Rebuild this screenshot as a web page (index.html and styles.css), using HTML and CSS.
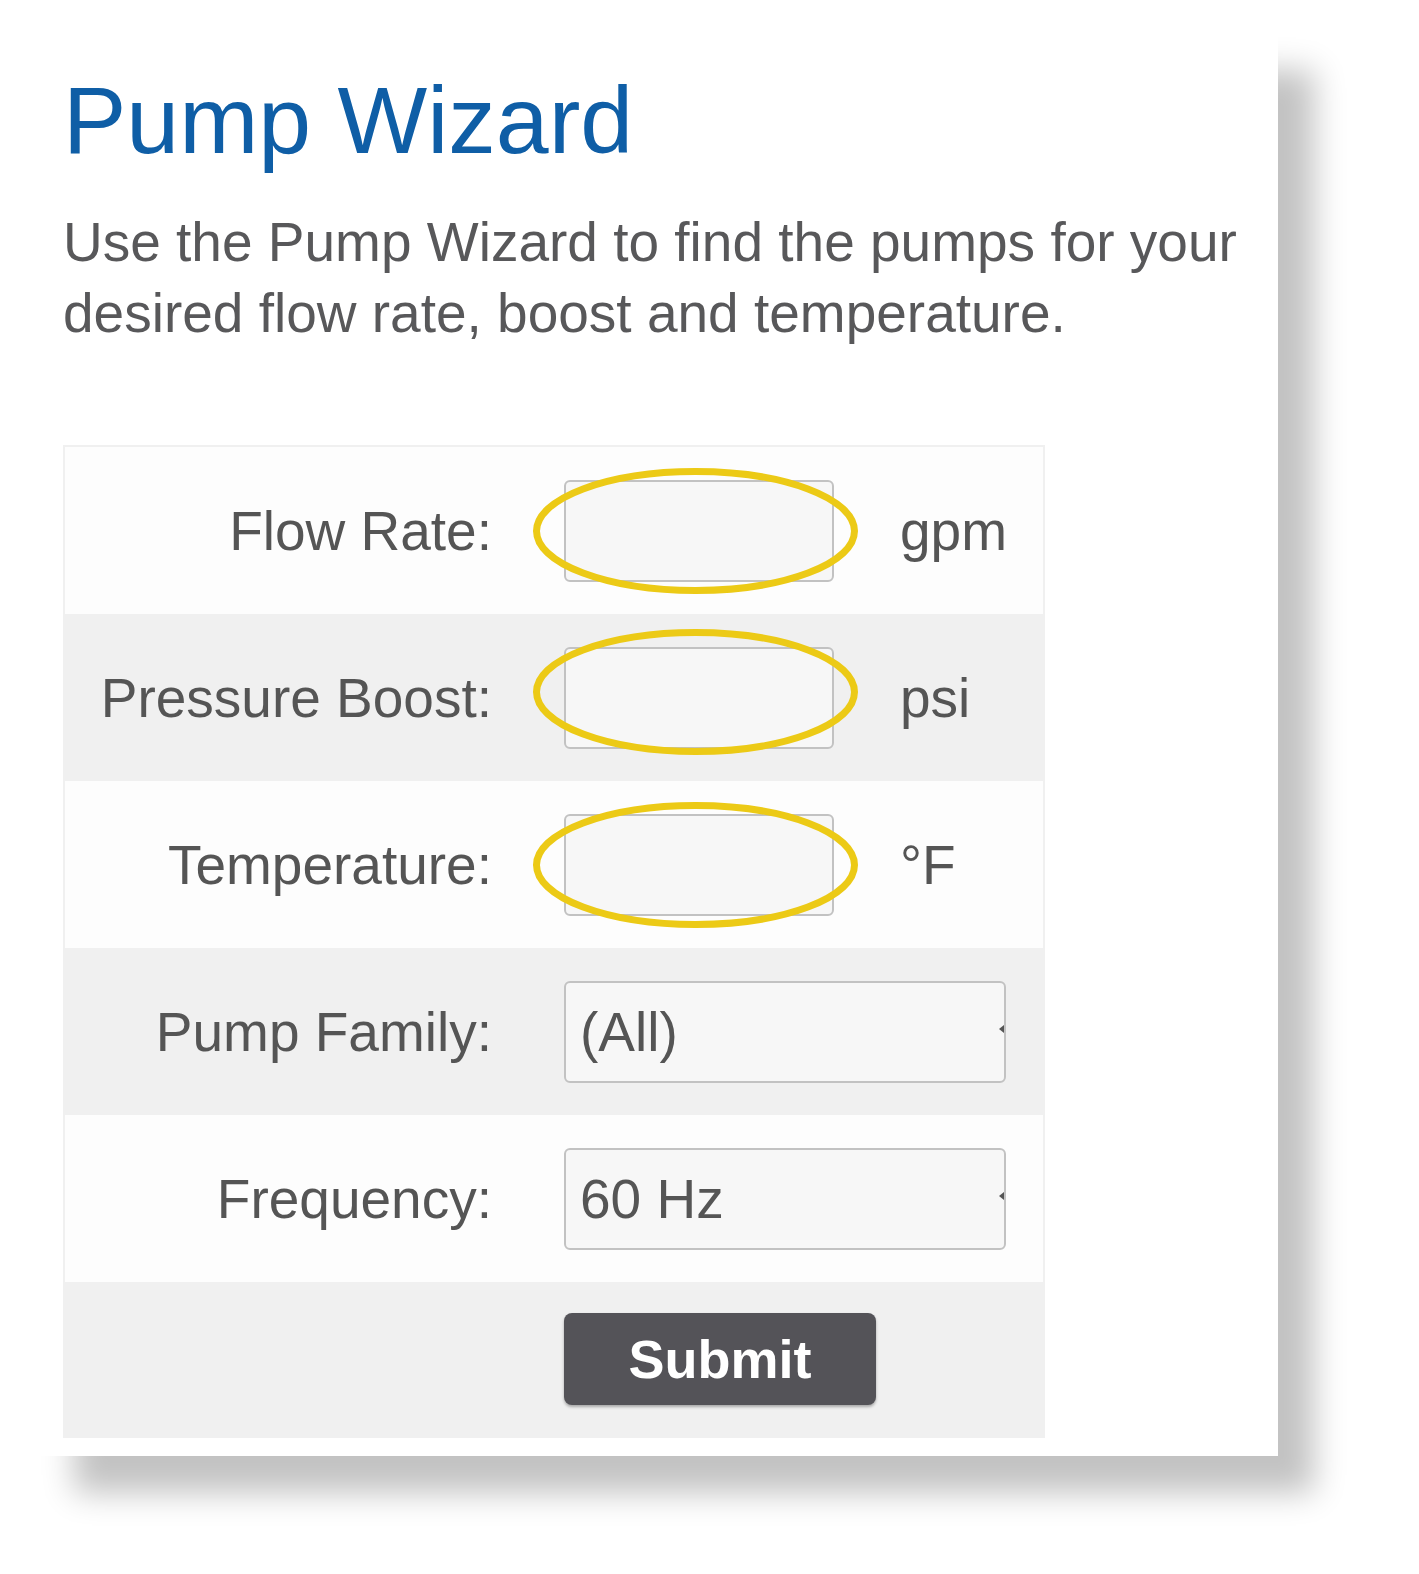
FILE: index.html
```html
<!DOCTYPE html>
<html lang="en">
<head>
    <meta charset="UTF-8">
    <meta name="viewport" content="width=device-width, initial-scale=1.0">
    <title>Pump Wizard</title>
    <link rel="stylesheet" href="styles.css">
</head>
<body>
    <div class="card">
        <h1>Pump Wizard</h1>
        <p class="intro">Use the Pump Wizard to find the pumps for your desired flow rate, boost and temperature.</p>

        <form class="wizard" onsubmit="return false;">
            <div class="row">
                <label for="flow">Flow Rate:</label>
                <div class="field">
                    <input type="text" id="flow">
                    <svg class="ring" viewBox="0 0 325 126"><ellipse cx="162.5" cy="63" rx="159" ry="59.5"/></svg>
                </div>
                <span class="unit">gpm</span>
            </div>
            <div class="row alt">
                <label for="boost">Pressure Boost:</label>
                <div class="field">
                    <input type="text" id="boost">
                    <svg class="ring up" viewBox="0 0 325 126"><ellipse cx="162.5" cy="63" rx="159" ry="59.5"/></svg>
                </div>
                <span class="unit">psi</span>
            </div>
            <div class="row">
                <label for="temp">Temperature:</label>
                <div class="field">
                    <input type="text" id="temp">
                    <svg class="ring" viewBox="0 0 325 126"><ellipse cx="162.5" cy="63" rx="159" ry="59.5"/></svg>
                </div>
                <span class="unit">&deg;F</span>
            </div>
            <div class="row alt">
                <label for="family">Pump Family:</label>
                <div class="select-wrap">
                    <select id="family">
                        <option>(All)</option>
                    </select>
                </div>
            </div>
            <div class="row">
                <label for="freq">Frequency:</label>
                <div class="select-wrap">
                    <select id="freq">
                        <option>60 Hz</option>
                        <option>50 Hz</option>
                    </select>
                </div>
            </div>
            <div class="row alt last">
                <span></span>
                <button type="submit">Submit</button>
            </div>
        </form>
    </div>
</body>
</html>
```

FILE: styles.css
```css
body {
    font-family: "Liberation Sans", Arial, sans-serif;
    background-color: #fff;
    color: #555;
    margin: 0;
    padding: 0 0 118px 0;
}
.card {
    background-color: #fff;
    margin: 33px 0 0 38px;
    width: 1240px;
    padding: 40px 20px 18px 25px;
    box-sizing: border-box;
    box-shadow: 36px 37px 30px rgba(0, 0, 0, 0.24);
}
h1 {
    color: #0f5ea6;
    font-size: 95px;
    font-weight: normal;
    line-height: 1;
    margin: 0;
}
.intro {
    font-size: 55px;
    line-height: 71px;
    margin: 39px 0 96px 0;
    color: #58585a;
}
.wizard {
    width: 982px;
    border: 2px solid #f0f0f0;
    box-sizing: border-box;
}
.row {
    display: grid;
    grid-template-columns: 499px 270px 1fr;
    align-items: center;
    height: 167px;
    background-color: #fdfdfd;
    font-size: 55px;
}
.row.alt {
    background-color: #f0f0f0;
}
.row.last {
    height: 154px;
}
.row label {
    text-align: right;
    padding-right: 72px;
    color: #555;
}
.field {
    position: relative;
    height: 102px;
}
.field input {
    width: 100%;
    height: 102px;
    box-sizing: border-box;
    border: 2px solid #c2c2c2;
    border-radius: 6px;
    background-color: #f7f7f7;
    font: inherit;
    margin: 0;
}
.ring {
    position: absolute;
    left: -31px;
    top: -12px;
    width: 325px;
    height: 126px;
    overflow: visible;
}
.ring.up {
    top: -18px;
}
.ring ellipse {
    fill: none;
    stroke: #ecca16;
    stroke-width: 7;
}
.unit {
    padding-left: 66px;
    color: #555;
}
.select-wrap {
    grid-column: 2 / 4;
    position: relative;
    width: 442px;
    height: 102px;
}
.select-wrap::after {
    content: "";
    position: absolute;
    right: 2px;
    top: 44px;
    border-top: 4px solid transparent;
    border-bottom: 4px solid transparent;
    border-right: 5px solid #555;
}
.select-wrap select {
    appearance: none;
    -webkit-appearance: none;
    width: 100%;
    height: 102px;
    box-sizing: border-box;
    border: 2px solid #c2c2c2;
    border-radius: 6px;
    background-color: #f7f7f7;
    color: #555;
    font: inherit;
    padding: 0 0 0 14px;
    margin: 0;
}
button {
    width: 312px;
    height: 92px;
    background-color: #545358;
    color: #fff;
    border: none;
    border-radius: 8px;
    font-family: "Liberation Sans", Arial, sans-serif;
    font-size: 54px;
    font-weight: bold;
    box-shadow: 0 2px 3px rgba(0, 0, 0, 0.3);
    cursor: pointer;
    padding: 0;
}
```
